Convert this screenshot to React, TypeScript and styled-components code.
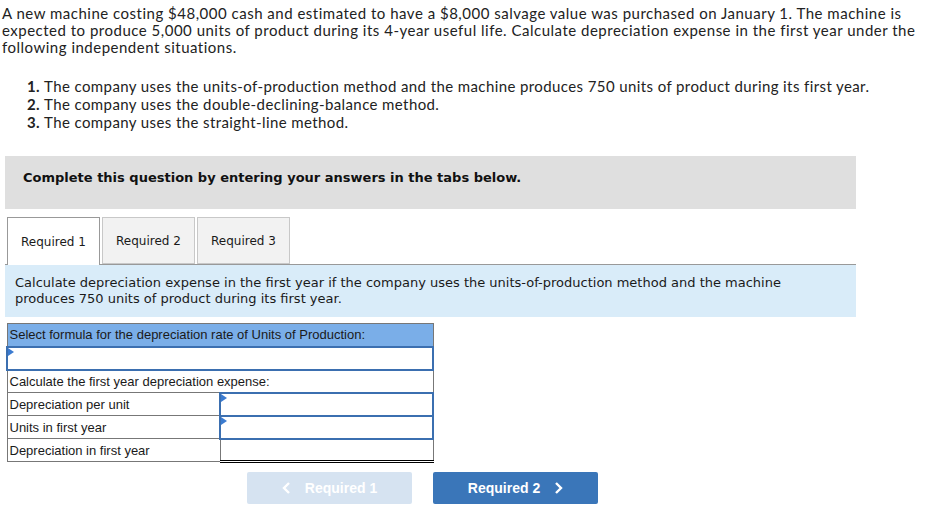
import styled, { createGlobalStyle } from "styled-components";

const GlobalStyle = createGlobalStyle`
  body {
    margin: 0;
    background: #fff;
  }
`;

const Page = styled.div`
  padding: 5px 2px 0 2px;
  width: 935px;
  box-sizing: border-box;
`;

const Intro = styled.p`
  margin: 0;
  width: 930px;
  font-family: Lato, "Open Sans", sans-serif;
  font-size: 15px;
  letter-spacing: 0.5px;
  line-height: 17px;
  color: #222;
  white-space: nowrap;
`;

const List = styled.ol`
  margin: 21px 0 0 0;
  padding: 0 0 0 25px;
  list-style: none;
  font-family: Lato, "Open Sans", sans-serif;
  font-size: 15px;
  letter-spacing: 0.4px;
  line-height: 18px;
  color: #222;

  b {
    font-weight: 700;
    margin-right: 4px;
  }
`;

const Banner = styled.div`
  margin: 25px 0 0 3px;
  width: 851px;
  height: 53px;
  padding: 14px 0 0 18px;
  box-sizing: border-box;
  background: #dfdfdf;
  font-family: "DejaVu Sans", Verdana, sans-serif;
  font-weight: 700;
  font-size: 13px;
  line-height: 16px;
  color: #111;
`;

const Tabs = styled.div`
  display: flex;
  gap: 2px;
  margin: 8px 0 0 5px;
  position: relative;
  z-index: 1;
`;

const Tab = styled.div<{ $active?: boolean }>`
  width: 93px;
  height: ${(p) => (p.$active ? 48 : 47)}px;
  box-sizing: border-box;
  display: flex;
  align-items: center;
  justify-content: center;
  border: 1px solid ${(p) => (p.$active ? "#999" : "#c8c8c8")};
  border-bottom: ${(p) => (p.$active ? "none" : "1px solid #c8c8c8")};
  background: ${(p) => (p.$active ? "#fff" : "#f2f2f2")};
  font-family: "DejaVu Sans", Verdana, sans-serif;
  font-size: 12px;
  color: #1a1a1a;
  margin-bottom: ${(p) => (p.$active ? -1 : 0)}px;
`;

const Info = styled.div`
  margin-left: 3px;
  width: 851px;
  box-sizing: border-box;
  padding: 10px 10px 10px 10px;
  background: #d9ecf9;
  border-top: 1px solid #999;
  font-family: "DejaVu Sans", Verdana, sans-serif;
  font-size: 13px;
  line-height: 16px;
  color: #1a1a1a;
`;

const Table = styled.table`
  margin: 6px 0 0 4px;
  border-collapse: collapse;
  width: 428px;
  font-family: "Liberation Sans", Arial, sans-serif;
  font-size: 13px;
  color: #1a1a1a;

  td {
    border: 1px solid #777;
    height: 23px;
    padding: 0 2px;
    box-sizing: border-box;
  }
`;

const HeadCell = styled.td`
  background: #7aaee8;
`;

const InputCell = styled.td<{ $total?: boolean }>`
  position: relative;
  width: 213px;
  && {
    border: ${(p) => (p.$total ? "1px solid #777" : "2px solid #3b6fb0")};
    border-bottom: ${(p) => (p.$total ? "3px double #000" : "2px solid #3b6fb0")};
  }
`;

const Marker = styled.span`
  position: absolute;
  left: 0;
  top: 0;
  width: 0;
  height: 0;
  border-top: 4px solid transparent;
  border-bottom: 4px solid transparent;
  border-left: 6px solid #3b7bd0;
`;

const Nav = styled.div`
  display: flex;
  gap: 21px;
  margin: 9px 0 0 245px;
`;

const NavButton = styled.button<{ $disabled?: boolean }>`
  width: 165px;
  height: 32px;
  border: none;
  border-radius: 2px;
  background: ${(p) => (p.$disabled ? "#d6e3f1" : "#3a76b9")};
  color: #fff;
  font-family: "Liberation Sans", Arial, sans-serif;
  font-weight: 700;
  font-size: 14px;
  display: flex;
  align-items: center;
  justify-content: center;
  gap: 14px;
  cursor: pointer;
`;

const Chevron = ({ dir }: { dir: "left" | "right" }) => (
  <svg width="9" height="12" viewBox="0 0 9 12">
    <path
      d={dir === "left" ? "M7 1 L2 6 L7 11" : "M2 1 L7 6 L2 11"}
      stroke="#fff"
      strokeWidth="2.4"
      fill="none"
    />
  </svg>
);

const items = [
  "The company uses the units-of-production method and the machine produces 750 units of product during its first year.",
  "The company uses the double-declining-balance method.",
  "The company uses the straight-line method.",
];

export default function App() {
  return (
    <Page>
      <GlobalStyle />
      <Intro>
        A new machine costing $48,000 cash and estimated to have a $8,000 salvage value was
        purchased on January 1. The machine is
        <br />
        expected to produce 5,000 units of product during its 4-year useful life. Calculate
        depreciation expense in the first year under the
        <br />
        following independent situations.
      </Intro>
      <List>
        {items.map((text, i) => (
          <li key={i}>
            <b>{i + 1}.</b>
            {text}
          </li>
        ))}
      </List>
      <Banner>Complete this question by entering your answers in the tabs below.</Banner>
      <Tabs>
        <Tab $active>Required 1</Tab>
        <Tab>Required 2</Tab>
        <Tab>Required 3</Tab>
      </Tabs>
      <Info>
        Calculate depreciation expense in the first year if the company uses the
        units-of-production method and the machine
        <br />
        produces 750 units of product during its first year.
      </Info>
      <Table>
        <tbody>
          <tr>
            <HeadCell colSpan={2}>Select formula for the depreciation rate of Units of Production:</HeadCell>
          </tr>
          <tr>
            <InputCell colSpan={2}>
              <Marker />
            </InputCell>
          </tr>
          <tr>
            <td colSpan={2}>Calculate the first year depreciation expense:</td>
          </tr>
          <tr>
            <td>Depreciation per unit</td>
            <InputCell>
              <Marker />
            </InputCell>
          </tr>
          <tr>
            <td>Units in first year</td>
            <InputCell>
              <Marker />
            </InputCell>
          </tr>
          <tr>
            <td>Depreciation in first year</td>
            <InputCell $total />
          </tr>
        </tbody>
      </Table>
      <Nav>
        <NavButton $disabled>
          <Chevron dir="left" />
          Required 1
        </NavButton>
        <NavButton>
          Required 2
          <Chevron dir="right" />
        </NavButton>
      </Nav>
    </Page>
  );
}
